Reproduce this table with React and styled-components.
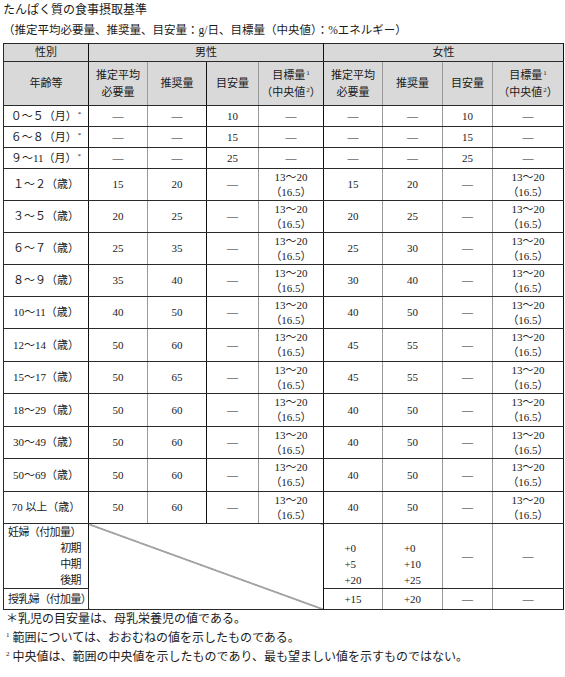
import React from "react";
import styled, { createGlobalStyle } from "styled-components";

const GlobalStyle = createGlobalStyle`
  body {
    margin: 0;
    background: #fff;
    color: #1a1a1a;
    font-family: "Liberation Serif", "Noto Sans CJK JP", serif;
  }
`;

const Page = styled.div`
  width: 565px;
  padding: 2px 2px 0 3px;
  box-sizing: border-box;
`;

const Title = styled.div`
  font-size: 12px;
  line-height: 16px;
`;

const Unit = styled.div`
  font-size: 11.5px;
  line-height: 18px;
  margin-top: 3px;
`;

const Table = styled.table`
  margin-top: 4px;
  width: 560px;
  border-collapse: collapse;
  table-layout: fixed;
  font-size: 11px;
`;

const Row = styled.tr`
  height: ${(p) => p.$h || 21}px;
`;

const Cell = styled.td`
  border: 1px solid #2a2a2a;
  border-right-color: ${(p) => p.$r || "#2a2a2a"};
  padding: 0 ${(p) => (p.$align === "left" ? "4px" : "0")};
  text-align: ${(p) => p.$align || "center"};
  vertical-align: middle;
  line-height: 15px;
  white-space: nowrap;
  letter-spacing: ${(p) => (p.$align === "left" ? "-0.6px" : "0")};
`;

const Head = styled(Cell).attrs({ as: "th" })`
  background: #d9d9d9;
  font-weight: normal;
  line-height: 17px;
`;

const Diagonal = styled(Cell)`
  background: linear-gradient(
    to top right,
    transparent calc(50% - 0.8px),
    #262626 50%,
    transparent calc(50% + 0.8px)
  );
`;

const Sup = styled.sup`
  font-size: 7px;
  line-height: 0;
  vertical-align: 4px;
  margin-left: 1px;
`;

const Stack = styled.div`
  display: inline-block;
  text-align: left;
  line-height: 16px;
`;

const Pregnant = styled.div`
  display: flex;
  flex-direction: column;
  line-height: 16px;
  padding-right: 3px;
`;

const Stage = styled.span`
  align-self: flex-end;
`;

const Notes = styled.div`
  font-size: 12px;
  line-height: 19px;
  padding-left: 3px;
`;

const NoteSup = styled.sup`
  font-size: 7px;
  line-height: 0;
  vertical-align: 5px;
  margin-right: 3px;
`;

const DASH = "—";
const cols = [85, 59, 59, 52, 65, 59, 60, 50, 71];
const line = ["#111", "#9a9a9a", "#111", "#9a9a9a", "#111", "#9a9a9a", "#9a9a9a", "#9a9a9a", "#111"];

const infants = [
  ["０～５（月）", "10", 21],
  ["６～８（月）", "15", 21],
  ["９～11（月）", "25", 21],
];

const ages = [
  ["１～２（歳）", 15, 20, 15, 20, 32],
  ["３～５（歳）", 20, 25, 20, 25, 32],
  ["６～７（歳）", 25, 35, 25, 30, 32],
  ["８～９（歳）", 35, 40, 30, 40, 32],
  ["10～11（歳）", 40, 50, 40, 50, 32],
  ["12～14（歳）", 50, 60, 45, 55, 33],
  ["15～17（歳）", 50, 65, 45, 55, 32],
  ["18～29（歳）", 50, 60, 40, 50, 33],
  ["30～49（歳）", 50, 60, 40, 50, 32],
  ["50～69（歳）", 50, 60, 40, 50, 33],
  ["70 以上（歳）", 50, 60, 40, 50, 32],
];

const Target = () => (
  <>
    13～20
    <br />
    （16.5）
  </>
);

const App = () => {
  return (
    <Page>
      <GlobalStyle />
      <Title>たんぱく質の食事摂取基準</Title>
      <Unit>（推定平均必要量、推奨量、目安量：g/日、目標量（中央値）：%エネルギー）</Unit>
      <Table>
        <colgroup>
          {cols.map((w, i) => (
            <col key={i} style={{ width: w }} />
          ))}
        </colgroup>
        <thead>
          <Row $h={16}>
            <Head $r={line[0]}>性別</Head>
            <Head colSpan={4} $r={line[4]}>男性</Head>
            <Head colSpan={4} $r={line[8]}>女性</Head>
          </Row>
          <Row $h={44}>
            <Head $r={line[0]}>年齢等</Head>
            {[0, 1].map((g) => (
              <React.Fragment key={g}>
                <Head $r={line[1 + g * 4]}>
                  推定平均
                  <br />
                  必要量
                </Head>
                <Head $r={line[2 + g * 4]}>推奨量</Head>
                <Head $r={line[3 + g * 4]}>目安量</Head>
                <Head $r={line[4 + g * 4]}>
                  目標量<Sup>1</Sup>
                  <br />
                  （中央値<Sup>2</Sup>）
                </Head>
              </React.Fragment>
            ))}
          </Row>
        </thead>
        <tbody>
          {infants.map(([age, ai, h]) => (
            <Row key={age} $h={h}>
              <Cell $r={line[0]}>
                {age}
                <Sup>*</Sup>
              </Cell>
              {[DASH, DASH, ai, DASH, DASH, DASH, ai, DASH].map((v, i) => (
                <Cell key={i} $r={line[i + 1]}>
                  {v}
                </Cell>
              ))}
            </Row>
          ))}
          {ages.map(([age, mEar, mRda, fEar, fRda, h]) => (
            <Row key={age} $h={h}>
              <Cell $r={line[0]}>{age}</Cell>
              <Cell $r={line[1]}>{mEar}</Cell>
              <Cell $r={line[2]}>{mRda}</Cell>
              <Cell $r={line[3]}>{DASH}</Cell>
              <Cell $r={line[4]}>
                <Target />
              </Cell>
              <Cell $r={line[5]}>{fEar}</Cell>
              <Cell $r={line[6]}>{fRda}</Cell>
              <Cell $r={line[7]}>{DASH}</Cell>
              <Cell $r={line[8]}>
                <Target />
              </Cell>
            </Row>
          ))}
          <Row $h={65}>
            <Cell $align="left" $r={line[0]}>
              <Pregnant>
                <span>妊婦（付加量）</span>
                <Stage>初期</Stage>
                <Stage>中期</Stage>
                <Stage>後期</Stage>
              </Pregnant>
            </Cell>
            <Diagonal colSpan={4} rowSpan={2} $r={line[4]} />
            <Cell $r={line[5]}>
              <Stack>
                &nbsp;
                <br />+0
                <br />+5
                <br />+20
              </Stack>
            </Cell>
            <Cell $r={line[6]}>
              <Stack>
                &nbsp;
                <br />+0
                <br />+10
                <br />+25
              </Stack>
            </Cell>
            <Cell $r={line[7]}>{DASH}</Cell>
            <Cell $r={line[8]}>{DASH}</Cell>
          </Row>
          <Row $h={21}>
            <Cell $align="left" $r={line[0]}>
              授乳婦（付加量）
            </Cell>
            <Cell $r={line[5]}>+15</Cell>
            <Cell $r={line[6]}>+20</Cell>
            <Cell $r={line[7]}>{DASH}</Cell>
            <Cell $r={line[8]}>{DASH}</Cell>
          </Row>
        </tbody>
      </Table>
      <Notes>
        <div>＊乳児の目安量は、母乳栄養児の値である。</div>
        <div>
          <NoteSup>1</NoteSup>範囲については、おおむねの値を示したものである。
        </div>
        <div>
          <NoteSup>2</NoteSup>中央値は、範囲の中央値を示したものであり、最も望ましい値を示すものではない。
        </div>
      </Notes>
    </Page>
  );
};

export default App;
